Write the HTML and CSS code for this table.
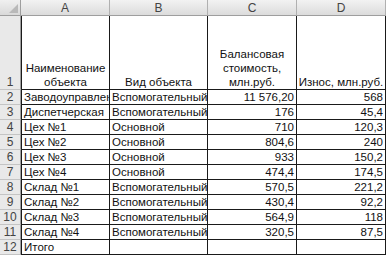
FILE: index.html
```html
<!DOCTYPE html>
<html>
<head>
<meta charset="utf-8">
<link rel="stylesheet" href="styles.css">
</head>
<body>
<div class="sheet">
  <div class="corner"><span class="tri"></span></div>
  <div class="colh">A</div>
  <div class="colh">B</div>
  <div class="colh">C</div>
  <div class="colh">D</div>

  <div class="rowh">1</div>
  <div class="cell head first">Наименование объекта</div>
  <div class="cell head">Вид объекта</div>
  <div class="cell head">Балансовая стоимость, млн.руб.</div>
  <div class="cell head single">Износ, млн.руб.</div>

  <div class="rowh">2</div>
  <div class="cell first">Заводоуправление</div>
  <div class="cell">Вспомогательный</div>
  <div class="cell num">11 576,20</div>
  <div class="cell num">568</div>

  <div class="rowh">3</div>
  <div class="cell first">Диспетчерская</div>
  <div class="cell">Вспомогательный</div>
  <div class="cell num">176</div>
  <div class="cell num">45,4</div>

  <div class="rowh">4</div>
  <div class="cell first">Цех №1</div>
  <div class="cell">Основной</div>
  <div class="cell num">710</div>
  <div class="cell num">120,3</div>

  <div class="rowh">5</div>
  <div class="cell first">Цех №2</div>
  <div class="cell">Основной</div>
  <div class="cell num">804,6</div>
  <div class="cell num">240</div>

  <div class="rowh">6</div>
  <div class="cell first">Цех №3</div>
  <div class="cell">Основной</div>
  <div class="cell num">933</div>
  <div class="cell num">150,2</div>

  <div class="rowh">7</div>
  <div class="cell first">Цех №4</div>
  <div class="cell">Основной</div>
  <div class="cell num">474,4</div>
  <div class="cell num">174,5</div>

  <div class="rowh">8</div>
  <div class="cell first">Склад №1</div>
  <div class="cell">Вспомогательный</div>
  <div class="cell num">570,5</div>
  <div class="cell num">221,2</div>

  <div class="rowh">9</div>
  <div class="cell first">Склад №2</div>
  <div class="cell">Вспомогательный</div>
  <div class="cell num">430,4</div>
  <div class="cell num">92,2</div>

  <div class="rowh">10</div>
  <div class="cell first">Склад №3</div>
  <div class="cell">Вспомогательный</div>
  <div class="cell num">564,9</div>
  <div class="cell num">118</div>

  <div class="rowh">11</div>
  <div class="cell first">Склад №4</div>
  <div class="cell">Вспомогательный</div>
  <div class="cell num">320,5</div>
  <div class="cell num">87,5</div>

  <div class="rowh">12</div>
  <div class="cell first">Итого</div>
  <div class="cell"></div>
  <div class="cell num"></div>
  <div class="cell num"></div>
</div>
</body>
</html>
```

FILE: styles.css
```css
html, body {
  margin: 0;
  padding: 0;
  background: #ffffff;
}

.sheet {
  display: grid;
  grid-template-columns: 21px 89px 98px 89px 89px;
  grid-template-rows: 16px 74px repeat(11, 15px);
  font-family: "Liberation Sans", Arial, sans-serif;
  font-size: 11.5px;
  color: #111;
}

.corner {
  background: linear-gradient(#f0f0f0, #d9d9d9);
  border-right: 1px solid #9e9e9e;
  border-bottom: 1px solid #9e9e9e;
  box-sizing: border-box;
  display: flex;
  align-items: flex-end;
  justify-content: flex-end;
  padding: 0 2px 2px 0;
}

.tri {
  width: 0;
  height: 0;
  border-left: 9px solid transparent;
  border-bottom: 9px solid #b9b9b9;
}

.colh {
  background: linear-gradient(#f2f2f2, #dcdcdc);
  border-right: 1px solid #b0b0b0;
  border-bottom: 1px solid #9e9e9e;
  box-sizing: border-box;
  display: flex;
  align-items: center;
  justify-content: center;
  color: #444;
  font-size: 12px;
  line-height: 1;
}

.rowh {
  background: #e9e9e9;
  border-right: 1px solid #9e9e9e;
  border-bottom: 1px solid #c4c4c4;
  box-sizing: border-box;
  display: flex;
  align-items: flex-end;
  justify-content: center;
  color: #444;
  line-height: 13px;
  font-size: 12px;
}

.cell {
  border-right: 1px solid #1a1a1a;
  border-bottom: 1px solid #1a1a1a;
  box-sizing: border-box;
  display: flex;
  align-items: flex-end;
  padding: 0 2px 0 2px;
  line-height: 13px;
  white-space: nowrap;
  overflow: hidden;
}

.first {
  border-left: 1px solid #1a1a1a;
}

.num {
  justify-content: flex-end;
}

.head {
  white-space: normal;
  justify-content: center;
  text-align: center;
  font-size: 11.5px;
  line-height: 14px;
  padding-bottom: 0;
}

.single {
  white-space: nowrap;
  padding: 0;
}
```
